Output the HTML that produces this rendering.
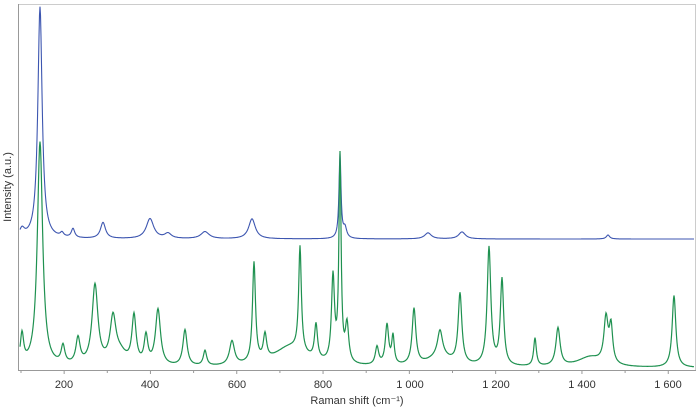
<!DOCTYPE html>
<html><head><meta charset="utf-8"><style>
body{margin:0;background:#fff;width:700px;height:408px;overflow:hidden;font-family:"Liberation Sans",sans-serif}
svg{display:block}
text{font-family:"Liberation Sans",sans-serif;fill:#333;font-size:11px}
</style></head><body>
<svg id="s" width="700" height="408" viewBox="0 0 700 408">
<rect x="18.5" y="4.5" width="677" height="366" fill="none" stroke="#ccc"/>
<line x1="18.5" y1="4" x2="18.5" y2="371" stroke="#999"/>
<line x1="18" y1="370.5" x2="696" y2="370.5" stroke="#999"/>
<g id="ticks" stroke="#999"></g>
<g text-anchor="middle">
<text x="64" y="388">200</text><text x="150" y="388">400</text><text x="237" y="388">600</text><text x="323" y="388">800</text><text x="410" y="388">1 000</text><text x="496" y="388">1 200</text><text x="582" y="388">1 400</text><text x="668" y="388">1 600</text>
<text x="357" y="404">Raman shift (cm⁻¹)</text>
<text transform="translate(11,187) rotate(-90)">Intensity (a.u.)</text>
</g>
<path id="b" fill="none" stroke="#3d56b0" stroke-width="1.1"/>
<path id="g" fill="none" stroke="#1f9150" stroke-width="1.2"/>
</svg>
<script>
var t='';for(var i=0;i<16;i++){var x=21+i*43.15;t+='<line x1="'+x+'" y1="371" x2="'+x+'" y2="'+(i%2?374:373)+'"/>';}
document.getElementById('ticks').innerHTML=t;
function mk(base,pk,extra){var d='';for(var x=20;x<=694;x+=0.5){var y=base;for(var k=0;k<pk.length;k++){var p=pk[k],u=(x-p[0])/p[2];y-=p[1]/(1+u*u);}if(extra)y+=extra(x);d+=(d?'L':'M')+x.toFixed(1)+' '+y.toFixed(1);}return d;}
var G=[[22,30,2],[40,225,3.2],[63,18,2.2],[78,26,2.5],[95,80,3.5],[113,44,3.5],[134,48,2.5],[146,28,2.2],[158,56,3],[185,36,2.5],[205,15,2],[232,24,3],[254,100,1.8],[265,25,2],[300,105,1.6],[316,35,1.8],[333,85,1.8],[340,205,1.3],[347,38,2],[377,18,2],[387,40,2],[393,28,1.5],[414,56,2.2],[440,26,3],[460,70,2.2],[489,118,2.2],[502,86,2],[535,28,1.6],[558,38,2.5],[606,45,2.5],[611,36,2],[674,72,2.2],[120,12,8],[290,20,20],[440,10,15],[590,10,15]];
var B=[[40,232,2.6],[62,4,2],[73,9,2],[103,16,3],[150,20,4.5],[168,5,4],[205,7,5],[252,20,4],[340,84,1.2],[345,10,2],[428,6,4],[462,7,4],[608,4,2],[22,8,3]];
document.getElementById('g').setAttribute('d',mk(368,G));
document.getElementById('b').setAttribute('d',mk(239,B));
</script>
</body></html>
